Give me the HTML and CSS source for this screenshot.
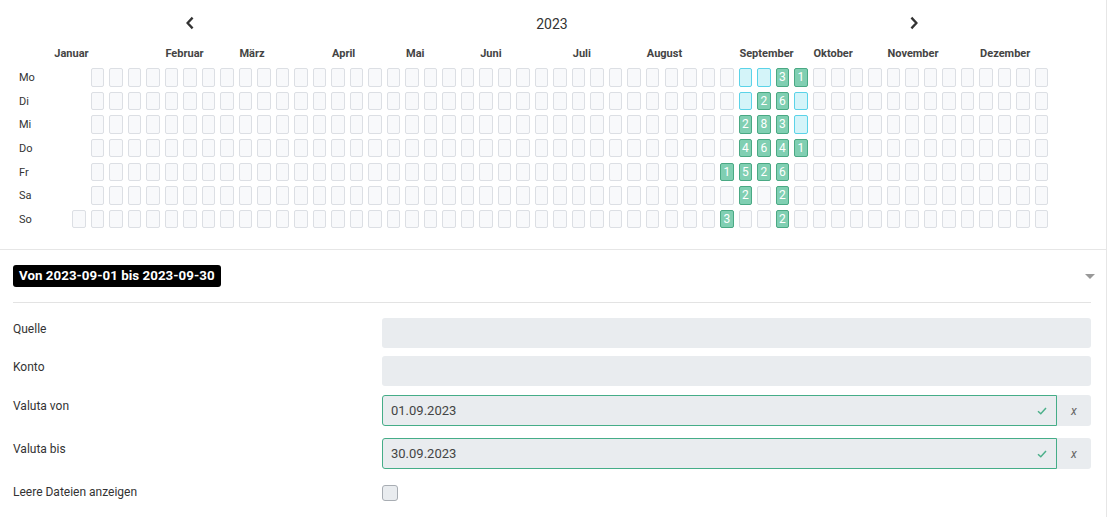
FILE: index.html
```html
<!DOCTYPE html>
<html lang="de">
<head>
<meta charset="utf-8">
<title>Kalender</title>
<link rel="stylesheet" href="styles.css">
</head>
<body>
<div class="page">
  <section class="calendar">
    <div class="cal-head">
      <button class="nav" aria-label="Vorheriges Jahr">
        <svg width="10" height="14" viewBox="0 0 10 14"><path d="M7.6 1.6 L2.6 7 L7.6 12.4" fill="none" stroke="#333" stroke-width="2.3"/></svg>
      </button>
      <span class="year">2023</span>
      <button class="nav" aria-label="Nächstes Jahr">
        <svg width="10" height="14" viewBox="0 0 10 14"><path d="M2.4 1.6 L7.4 7 L2.4 12.4" fill="none" stroke="#333" stroke-width="2.3"/></svg>
      </button>
    </div>
    <div class="months">
      <span class="m m1">Januar</span>
      <span class="m m2">Februar</span>
      <span class="m m3">März</span>
      <span class="m m4">April</span>
      <span class="m m5">Mai</span>
      <span class="m m6">Juni</span>
      <span class="m m7">Juli</span>
      <span class="m m8">August</span>
      <span class="m m9">September</span>
      <span class="m m10">Oktober</span>
      <span class="m m11">November</span>
      <span class="m m12">Dezember</span>
    </div>
    <div class="cal-body">
      <div class="days">
        <span>Mo</span><span>Di</span><span>Mi</span><span>Do</span><span>Fr</span><span>Sa</span><span>So</span>
      </div>
      <div class="cells" id="cells"></div>
    </div>
  </section>

  <section class="filter">
    <div class="filter-head">
      <span class="badge">Von 2023-09-01 bis 2023-09-30</span>
      <span class="caret"></span>
    </div>
    <hr class="sep">
    <div class="row r1">
      <label class="lbl">Quelle</label>
      <div class="field"></div>
    </div>
    <div class="row r2">
      <label class="lbl">Konto</label>
      <div class="field"></div>
    </div>
    <div class="row r3">
      <label class="lbl">Valuta von</label>
      <div class="date-group">
        <div class="date-input"><span>01.09.2023</span>
          <svg class="ok" width="10" height="8" viewBox="0 0 10 8"><path d="M1 4.2 L3.8 6.8 L9 1" fill="none" stroke="#4cb08a" stroke-width="1.5"/></svg>
        </div>
        <div class="clear">x</div>
      </div>
    </div>
    <div class="row r4">
      <label class="lbl">Valuta bis</label>
      <div class="date-group">
        <div class="date-input"><span>30.09.2023</span>
          <svg class="ok" width="10" height="8" viewBox="0 0 10 8"><path d="M1 4.2 L3.8 6.8 L9 1" fill="none" stroke="#4cb08a" stroke-width="1.5"/></svg>
        </div>
        <div class="clear">x</div>
      </div>
    </div>
    <div class="row r5">
      <label class="lbl">Leere Dateien anzeigen</label>
      <div><span class="checkbox"></span></div>
    </div>
  </section>
</div>
<script src="script.js"></script>
</body>
</html>
```

FILE: styles.css
```css
* { box-sizing: border-box; }
html, body { margin: 0; padding: 0; background: #fff; }
body {
  font-family: Roboto, "Liberation Sans", Arial, sans-serif;
  color: #333;
  overflow: hidden;
}
.page {
  width: 1107px;
  min-height: 517px;
  border-right: 1px solid #e6e6e6;
}

/* calendar */
.calendar {
  height: 250px;
  border-bottom: 1px solid #e6e6e6;
}
.cal-head {
  height: 46px;
  width: 734px;
  margin-left: 185px;
  display: flex;
  align-items: center;
  justify-content: space-between;
}
.nav {
  border: 0;
  background: none;
  padding: 0;
  width: 10px;
  height: 14px;
  display: flex;
  margin-top: -1px;
}
.year {
  font-size: 14px;
  color: #333;
  margin-top: 1px;
}
.months {
  display: grid;
  grid-template-columns: repeat(54, 13.5px);
  column-gap: 5.02px;
  margin-left: 54.3px;
  height: 14px;
  margin-top: 1px;
  margin-bottom: 7px;
}
.m {
  grid-row: 1;
  font-size: 11px;
  font-weight: 700;
  line-height: 14px;
  color: #444;
  white-space: nowrap;
}
.m1 { grid-column: 1; }
.m2 { grid-column: 7; }
.m3 { grid-column: 11; }
.m4 { grid-column: 16; }
.m5 { grid-column: 20; }
.m6 { grid-column: 24; }
.m7 { grid-column: 29; }
.m8 { grid-column: 33; }
.m9 { grid-column: 38; }
.m10 { grid-column: 42; }
.m11 { grid-column: 46; }
.m12 { grid-column: 51; }

.cal-body { display: flex; }
.days {
  width: 72px;
  padding-left: 19px;
  display: grid;
  grid-template-rows: repeat(7, 18.5px);
  row-gap: 5.17px;
}
.days span {
  font-size: 11px;
  line-height: 18.5px;
  padding-top: 1px;
  color: #333;
}
.cells {
  display: grid;
  grid-auto-flow: column;
  grid-template-rows: repeat(7, 18.5px);
  grid-auto-columns: 13.5px;
  row-gap: 5.17px;
  column-gap: 5.02px;
}
.cell {
  border: 1px solid #dcdfe4;
  background: #f8f9fb;
  border-radius: 2px;
  font-size: 12px;
  line-height: 16.5px;
  text-align: center;
  color: #fff;
}
.cell:first-child { grid-row: 7; }
.cell.has {
  background: #80cfb2;
  border-color: #4aa984;
}
.cell.range {
  background: #d4f4f9;
  border-color: #5bd3e8;
}

/* filter */
.filter {
  padding: 15px 15px 0 13px;
}
.filter-head {
  display: flex;
  align-items: center;
  justify-content: space-between;
  height: 22px;
}
.badge {
  background: #000;
  color: #fff;
  font-weight: 700;
  font-size: 13.3px;
  line-height: 22px;
  height: 22px;
  padding: 0 6px;
  letter-spacing: 0.05px;
  border-radius: 3px;
}
.caret {
  width: 0;
  height: 0;
  border-left: 5px solid transparent;
  border-right: 5px solid transparent;
  border-top: 5px solid #999;
  margin-right: -4px;
}
.sep {
  border: 0;
  border-top: 1px solid #e3e3e3;
  margin: 15px 0 0;
  height: 0;
}
.row {
  display: grid;
  grid-template-columns: 369px 1fr;
  align-items: start;
}
.r1 { margin-top: 15px; }
.r2 { margin-top: 8px; }
.r3 { margin-top: 9px; }
.r4 { margin-top: 12px; }
.r5 { margin-top: 16px; }
.lbl {
  font-size: 12px;
  line-height: 18px;
  padding-top: 1.5px;
  color: #333;
}
.r5 .lbl { padding-top: 0; margin-top: -2px; }
.field {
  height: 30px;
  background: #e9ecef;
  border-radius: 3px;
}
.date-group {
  display: flex;
  height: 31px;
}
.date-input {
  flex: 1;
  display: flex;
  align-items: center;
  justify-content: space-between;
  background: #e9ecef;
  border: 1px solid #45ad88;
  border-radius: 3px 0 0 3px;
  padding: 0 9px 0 8px;
  font-size: 13px;
  color: #444;
}
.ok { display: block; }
.clear {
  width: 34px;
  background: #e9ecef;
  border-radius: 0 3px 3px 0;
  display: flex;
  align-items: center;
  justify-content: center;
  font-size: 12px;
  font-style: italic;
  color: #666;
}
.checkbox {
  display: block;
  width: 16px;
  height: 16px;
  border: 1px solid #a8adb3;
  border-radius: 3px;
  background: #e9ecef;
}
```

FILE: script.js
```js
var counts = {1:1, 3:3, 6:2, 7:4, 8:5, 9:2, 12:2, 13:8, 14:6, 15:2, 18:3, 19:6, 20:3, 21:4, 22:6, 23:2, 24:2, 25:1, 28:1};
var inRange = {4:1, 5:1, 11:1, 26:1, 27:1};
var grid = document.getElementById('cells');
var d = new Date(2023, 0, 1);
while (d.getFullYear() === 2023) {
  var el = document.createElement('div');
  el.className = 'cell';
  if (d.getMonth() === 8) {
    var day = d.getDate();
    if (counts[day]) {
      el.className += ' has';
      el.textContent = counts[day];
    } else if (inRange[day]) {
      el.className += ' range';
    }
  }
  grid.appendChild(el);
  d.setDate(d.getDate() + 1);
}
```
